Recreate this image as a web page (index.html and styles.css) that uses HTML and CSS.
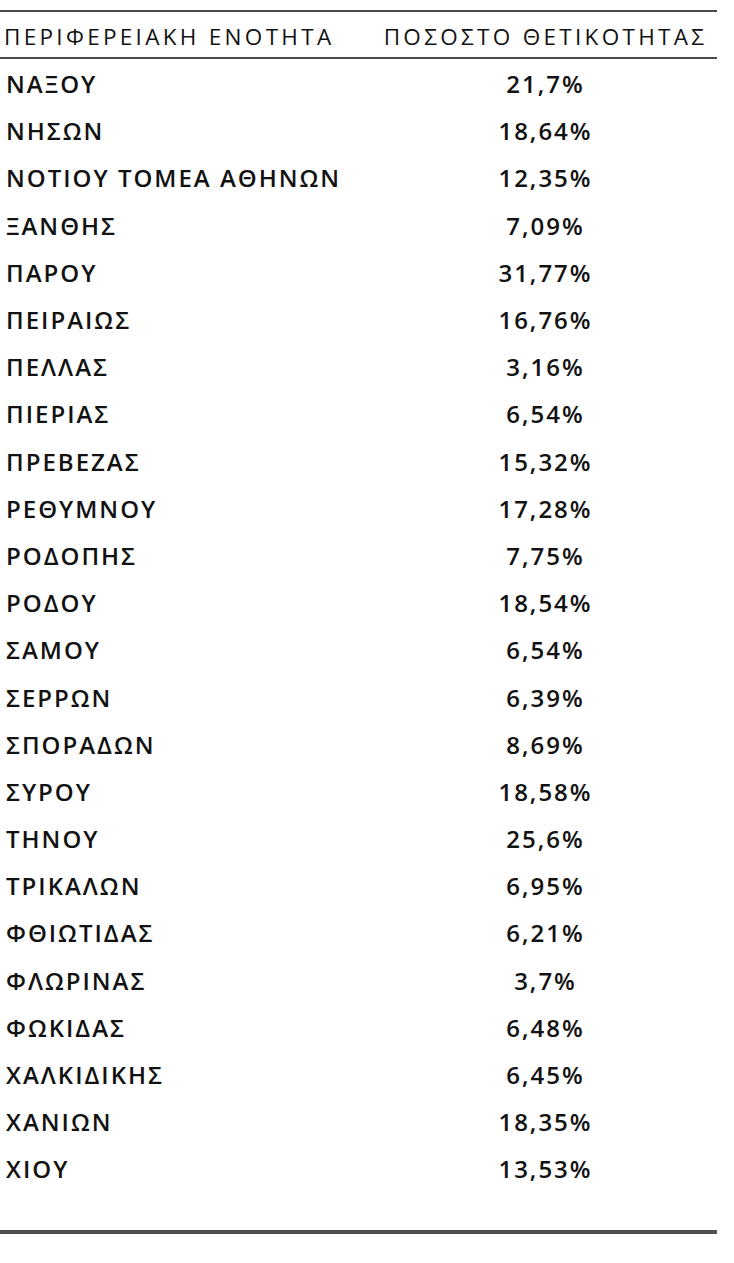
FILE: index.html
```html
<!DOCTYPE html>
<html lang="el">
<head>
<meta charset="utf-8">
<title>Ποσοστό θετικότητας</title>
<link rel="stylesheet" href="styles.css">
</head>
<body>
<div class="table">
  <div class="head">
    <div class="c1">ΠΕΡΙΦΕΡΕΙΑΚΗ ΕΝΟΤΗΤΑ</div>
    <div class="c2">ΠΟΣΟΣΤΟ ΘΕΤΙΚΟΤΗΤΑΣ</div>
  </div>
  <div class="body">
    <div class="row"><div class="c1">ΝΑΞΟΥ</div><div class="c2">21,7%</div></div>
    <div class="row"><div class="c1">ΝΗΣΩΝ</div><div class="c2">18,64%</div></div>
    <div class="row"><div class="c1">ΝΟΤΙΟΥ ΤΟΜΕΑ ΑΘΗΝΩΝ</div><div class="c2">12,35%</div></div>
    <div class="row"><div class="c1">ΞΑΝΘΗΣ</div><div class="c2">7,09%</div></div>
    <div class="row"><div class="c1">ΠΑΡΟΥ</div><div class="c2">31,77%</div></div>
    <div class="row"><div class="c1">ΠΕΙΡΑΙΩΣ</div><div class="c2">16,76%</div></div>
    <div class="row"><div class="c1">ΠΕΛΛΑΣ</div><div class="c2">3,16%</div></div>
    <div class="row"><div class="c1">ΠΙΕΡΙΑΣ</div><div class="c2">6,54%</div></div>
    <div class="row"><div class="c1">ΠΡΕΒΕΖΑΣ</div><div class="c2">15,32%</div></div>
    <div class="row"><div class="c1">ΡΕΘΥΜΝΟΥ</div><div class="c2">17,28%</div></div>
    <div class="row"><div class="c1">ΡΟΔΟΠΗΣ</div><div class="c2">7,75%</div></div>
    <div class="row"><div class="c1">ΡΟΔΟΥ</div><div class="c2">18,54%</div></div>
    <div class="row"><div class="c1">ΣΑΜΟΥ</div><div class="c2">6,54%</div></div>
    <div class="row"><div class="c1">ΣΕΡΡΩΝ</div><div class="c2">6,39%</div></div>
    <div class="row"><div class="c1">ΣΠΟΡΑΔΩΝ</div><div class="c2">8,69%</div></div>
    <div class="row"><div class="c1">ΣΥΡΟΥ</div><div class="c2">18,58%</div></div>
    <div class="row"><div class="c1">ΤΗΝΟΥ</div><div class="c2">25,6%</div></div>
    <div class="row"><div class="c1">ΤΡΙΚΑΛΩΝ</div><div class="c2">6,95%</div></div>
    <div class="row"><div class="c1">ΦΘΙΩΤΙΔΑΣ</div><div class="c2">6,21%</div></div>
    <div class="row"><div class="c1">ΦΛΩΡΙΝΑΣ</div><div class="c2">3,7%</div></div>
    <div class="row"><div class="c1">ΦΩΚΙΔΑΣ</div><div class="c2">6,48%</div></div>
    <div class="row"><div class="c1">ΧΑΛΚΙΔΙΚΗΣ</div><div class="c2">6,45%</div></div>
    <div class="row"><div class="c1">ΧΑΝΙΩΝ</div><div class="c2">18,35%</div></div>
    <div class="row"><div class="c1">ΧΙΟΥ</div><div class="c2">13,53%</div></div>
  </div>
</div>
</body>
</html>
```
FILE: styles.css
```css
html, body {
  margin: 0;
  padding: 0;
  background: #ffffff;
}
body {
  font-family: "Open Sans", "Noto Sans", sans-serif;
  color: #121212;
}
.table {
  width: 717px;
  margin-top: 10px;
  border-top: 2px solid #4a4a4a;
  border-bottom: 4px solid #505050;
  padding-bottom: 37px;
}
.head {
  display: grid;
  grid-template-columns: 374px 1fr;
  height: 45px;
  align-items: center;
  border-bottom: 2px solid #4a4a4a;
  font-size: 22.5px;
  font-weight: 500;
  letter-spacing: 3.3px;
}
.head .c1 {
  padding-left: 4px;
  padding-top: 4px;
}
.head .c2 {
  text-align: center;
  padding-top: 4px;
}
.body {
  padding-top: 1px;
}
.row {
  display: grid;
  grid-template-columns: 374px 1fr;
  height: 47.2px;
  align-items: center;
  font-size: 24px;
  font-weight: 600;
  letter-spacing: 2px;
}
.row .c1 {
  padding-left: 6px;
}
.row .c2 {
  text-align: center;
}
```
